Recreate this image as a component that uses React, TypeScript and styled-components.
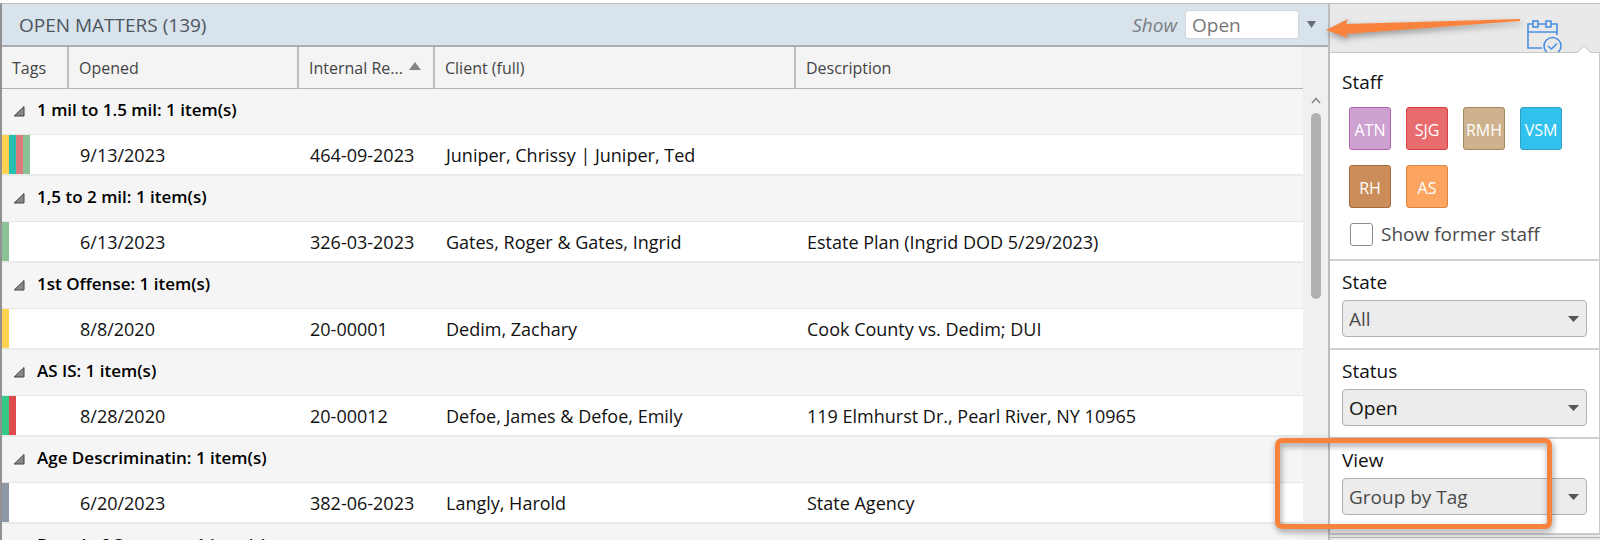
import React from "react";
import styled, { createGlobalStyle } from "styled-components";

const GlobalStyle = createGlobalStyle`
  * { box-sizing: border-box; }
  body {
    margin: 0;
    overflow: hidden;
    background: #fff;
    font-family: "Open Sans", "Noto Sans", sans-serif;
    color: #111;
  }
  button, input, select { font: inherit; }
`;

const Page = styled.div`
  position: relative;
  display: flex;
  height: 100vh;
  padding-top: 3px;
  overflow: hidden;
`;

const Matters = styled.main`
  flex: 1;
  min-width: 0;
  display: flex;
  flex-direction: column;
  border-top: 1px solid #bdbdbd;
  border-left: 2px solid #919191;
`;

const TitleBar = styled.header`
  flex: none;
  display: flex;
  align-items: center;
  height: 43px;
  padding: 0 12px 0 17px;
  background: #d9e3ec;
  border-bottom: 2px solid #a9adb1;
`;

const Title = styled.h1`
  flex: 1;
  margin: 0;
  font-size: 19px;
  font-weight: 400;
  color: #4d5660;
`;

const ShowLabel = styled.label`
  margin-right: 8px;
  font-size: 19px;
  font-style: italic;
  color: #7a7f84;
`;

const ShowInput = styled.input`
  width: 114px;
  height: 29px;
  padding: 0 6px;
  border: 1px solid #d2d6da;
  border-radius: 3px;
  background: #fff;
  font-size: 19px;
  color: #777;
`;

const ArrowButton = styled.button`
  display: flex;
  margin-left: 8px;
  padding: 0;
  border: 0;
  background: none;
`;

const Body = styled.div`
  flex: 1;
  min-height: 0;
  display: flex;
`;

const TableWrap = styled.div`
  flex: 1;
  min-width: 0;
  overflow: hidden;
`;

const Table = styled.table`
  width: 100%;
  table-layout: fixed;
  border-collapse: separate;
  border-spacing: 0;
`;

const Col = styled.col<{ $width?: number }>`
  ${(p) => (p.$width ? `width: ${p.$width}px;` : "")}
`;

const HeadCell = styled.th`
  height: 42px;
  padding: 0 0 0 10px;
  background: #f4f4f4;
  border-bottom: 1px solid #b4b4b4;
  text-align: left;
  font-size: 16px;
  font-weight: 400;
  color: #444;
  white-space: nowrap;
  & + & { border-left: 2px solid #bebebe; }
`;

const SortMark = styled.svg`
  margin: 0 0 4px 6px;
`;

const GroupCell = styled.th`
  height: 46px;
  padding: 0 0 5px 11px;
  background: #f5f5f5;
  border-bottom: 1px solid #e6e6e6;
  text-align: left;
  font-size: 17px;
  font-weight: 600;
  color: #000;
`;

const GroupToggle = styled.button`
  display: flex;
  align-items: center;
  gap: 12px;
  padding: 0;
  border: 0;
  background: none;
  color: inherit;
`;

const GroupMark = styled.svg`
  margin-top: 4px;
`;

const Cell = styled.td`
  height: 41px;
  padding: 1px 0 0 13px;
  background: #fff;
  border-bottom: 2px solid #eaeaea;
  font-size: 18px;
  white-space: nowrap;
`;

const TagCell = styled(Cell)`
  padding: 0;
`;

const Tags = styled.div`
  display: flex;
  height: 39px;
`;

const Tag = styled.span<{ $color: string }>`
  width: 7px;
  background: ${(p) => p.$color};
`;

const ScrollTrack = styled.div`
  flex: none;
  display: flex;
  flex-direction: column;
  align-items: center;
  width: 25px;
  padding-top: 50px;
  background: #f0f0f0;
`;

const ScrollThumb = styled.div`
  width: 10px;
  height: 186px;
  margin-top: 9px;
  border-radius: 5px;
  background: #b0b0b0;
`;

const Side = styled.aside`
  flex: none;
  display: flex;
  flex-direction: column;
  width: 272px;
  border-top: 1px solid #bdbdbd;
  border-left: 2px solid #bdbdbd;
  background: #e9e9e9;
`;

const SideTop = styled.div`
  flex: none;
  display: flex;
  justify-content: flex-end;
  align-items: flex-end;
  gap: 14px;
  height: 48px;
  padding-right: 9px;
`;

const Notch = styled.svg`
  position: relative;
  z-index: 1;
  margin-bottom: -1px;
`;

const Panel = styled.div`
  background: #fff;
  border: solid #c9c9c9;
  border-width: 1px 1px 2px 0;
`;

const SideFooter = styled.div`
  flex: 1;
  margin-top: 2px;
  border-top: 1px solid #b4b4b4;
`;

const Section = styled.section`
  padding: 7px 12px 11px;
  & + & { border-top: 2px solid #cfcfcf; }
  &:last-child { padding-bottom: 18px; }
`;

const StaffSection = styled(Section)`
  padding-top: 15px;
`;

const SectionLabel = styled.label`
  display: block;
  font-size: 19px;
  line-height: 28px;
  color: #111;
`;

const SectionTitle = styled.h2`
  margin: 0;
  font-size: 19px;
  font-weight: 400;
  line-height: 28px;
`;

const StaffGrid = styled.div`
  display: grid;
  grid-template-columns: repeat(4, 42px);
  gap: 15px;
  margin: 11px 0 0 7px;
`;

const StaffButton = styled.button<{ $fill: string; $edge: string }>`
  display: flex;
  justify-content: center;
  align-items: center;
  height: 43px;
  padding: 3px 0 0;
  border: 1px solid ${(p) => p.$edge};
  border-radius: 3px;
  background: ${(p) => p.$fill};
  font-size: 16px;
  color: #fff;
`;

const CheckRow = styled.label`
  display: flex;
  align-items: center;
  gap: 8px;
  margin: 12px 0 0 8px;
  font-size: 19px;
  line-height: 28px;
  color: #4a4a4a;
`;

const CheckBox = styled.input`
  appearance: none;
  width: 23px;
  height: 23px;
  margin: 0;
  border: 1px solid #8c8c8c;
  border-radius: 3px;
  background: #fff;
`;

const SelectWrap = styled.div`
  display: grid;
  align-items: center;
  margin-top: 4px;
`;

const Select = styled.select<{ $dark?: boolean }>`
  grid-area: 1 / 1;
  appearance: none;
  width: 100%;
  height: 37px;
  padding: 0 6px;
  border: 1px solid #b2b2b2;
  border-radius: 4px;
  background: #ececec;
  font-size: 19px;
  color: ${(p) => (p.$dark ? "#111" : "#4a4a4a")};
`;

const SelectArrow = styled.svg`
  grid-area: 1 / 1;
  justify-self: end;
  margin-right: 8px;
  pointer-events: none;
`;

const Pointer = styled.svg`
  position: absolute;
  top: 11px;
  right: 80px;
  pointer-events: none;
  filter: drop-shadow(1px 3px 3px rgba(0, 0, 0, 0.35));
`;

const Highlight = styled.div`
  position: absolute;
  top: 438px;
  right: 48px;
  width: 277px;
  height: 91px;
  border: 5px solid #f9833c;
  border-radius: 7px;
  pointer-events: none;
  filter: drop-shadow(1px 3px 3px rgba(0, 0, 0, 0.4));
`;

interface Matter {
  group: string;
  tags: string[];
  opened: string;
  reference: string;
  client: string;
  description: string;
}

const matters: Matter[] = [
  { group: "1 mil to 1.5 mil: 1 item(s)", tags: ["#fdd250", "#26bfb0", "#dd7a7d", "#8bc194"], opened: "9/13/2023", reference: "464-09-2023", client: "Juniper, Chrissy | Juniper, Ted", description: "" },
  { group: "1,5 to 2 mil: 1 item(s)", tags: ["#8bc194"], opened: "6/13/2023", reference: "326-03-2023", client: "Gates, Roger & Gates, Ingrid", description: "Estate Plan (Ingrid DOD 5/29/2023)" },
  { group: "1st Offense: 1 item(s)", tags: ["#fdd250"], opened: "8/8/2020", reference: "20-00001", client: "Dedim, Zachary", description: "Cook County vs. Dedim; DUI" },
  { group: "AS IS: 1 item(s)", tags: ["#35c987", "#df4a4c"], opened: "8/28/2020", reference: "20-00012", client: "Defoe, James & Defoe, Emily", description: "119 Elmhurst Dr., Pearl River, NY 10965" },
  { group: "Age Descriminatin: 1 item(s)", tags: ["#8c97a8"], opened: "6/20/2023", reference: "382-06-2023", client: "Langly, Harold", description: "State Agency" },
];

const staff = [
  { initials: "ATN", fill: "#cda1d0", edge: "#b262b6" },
  { initials: "SJG", fill: "#e86b6d", edge: "#d83f42" },
  { initials: "RMH", fill: "#cdb28d", edge: "#a58760" },
  { initials: "VSM", fill: "#31c1ee", edge: "#349fc0" },
  { initials: "RH", fill: "#cb8d59", edge: "#a56b3c" },
  { initials: "AS", fill: "#fca560", edge: "#dc8440" },
];

function Group({ label }: { label: string }) {
  return (
    <tr>
      <GroupCell colSpan={5} scope="colgroup">
        <GroupToggle type="button">
          <GroupMark width="12" height="12" viewBox="0 0 12 12" aria-hidden="true">
            <path d="M11 1.5V11H1.2Z" fill="#888" stroke="#444" />
          </GroupMark>
          {label}
        </GroupToggle>
      </GroupCell>
    </tr>
  );
}

function Filter({ id, label, value, dark }: { id: string; label: string; value: string; dark?: boolean }) {
  return (
    <Section>
      <SectionLabel htmlFor={id}>{label}</SectionLabel>
      <SelectWrap>
        <Select id={id} $dark={dark} defaultValue={value}>
          <option>{value}</option>
        </Select>
        <SelectArrow width="11" height="6" viewBox="0 0 11 6" aria-hidden="true">
          <path d="M0 0H11L5.5 6Z" fill="#555" />
        </SelectArrow>
      </SelectWrap>
    </Section>
  );
}

export default function App() {
  return (
    <Page>
      <GlobalStyle />
      <Matters>
        <TitleBar>
          <Title>OPEN MATTERS (139)</Title>
          <ShowLabel htmlFor="show">Show</ShowLabel>
          <ShowInput id="show" defaultValue="Open" />
          <ArrowButton type="button" aria-label="Choose which matters to show">
            <svg width="9" height="7" viewBox="0 0 9 7" aria-hidden="true">
              <path d="M0 0H9L4.5 7Z" fill="#666c72" />
            </svg>
          </ArrowButton>
        </TitleBar>
        <Body>
          <TableWrap>
            <Table>
              <colgroup>
                <Col $width={65} />
                <Col $width={230} />
                <Col $width={136} />
                <Col $width={361} />
                <Col />
              </colgroup>
              <thead>
                <tr>
                  <HeadCell>Tags</HeadCell>
                  <HeadCell>Opened</HeadCell>
                  <HeadCell aria-sort="ascending">
                    Internal Re...
                    <SortMark width="12" height="8" viewBox="0 0 12 8" aria-hidden="true">
                      <path d="M6 0L12 8H0Z" fill="#858585" />
                    </SortMark>
                  </HeadCell>
                  <HeadCell>Client (full)</HeadCell>
                  <HeadCell>Description</HeadCell>
                </tr>
              </thead>
              <tbody>
                {matters.map((m) => (
                  <React.Fragment key={m.group}>
                    <Group label={m.group} />
                    <tr>
                      <TagCell>
                        <Tags>
                          {m.tags.map((color) => (
                            <Tag key={color} $color={color} />
                          ))}
                        </Tags>
                      </TagCell>
                      <Cell>{m.opened}</Cell>
                      <Cell>{m.reference}</Cell>
                      <Cell>{m.client}</Cell>
                      <Cell>{m.description}</Cell>
                    </tr>
                  </React.Fragment>
                ))}
                <Group label="Board of Congress: 1 item(s)" />
              </tbody>
            </Table>
          </TableWrap>
          <ScrollTrack>
            <svg width="10" height="7" viewBox="0 0 10 7" aria-hidden="true">
              <path d="M1 6L5 1.5L9 6" fill="none" stroke="#8a8a8a" strokeWidth="1.6" />
            </svg>
            <ScrollThumb />
          </ScrollTrack>
        </Body>
      </Matters>
      <Side>
        <SideTop>
          <svg width="36" height="32" viewBox="0 0 36 32" fill="none" stroke="#4a90e2" strokeWidth="1.6" aria-hidden="true">
            <path d="M6 4H1V28H15M11 4H19M24 4H30V15M1 12H30" />
            <rect x="6" y="1" width="5" height="6" />
            <rect x="19" y="1" width="5" height="6" />
            <circle cx="25.500" cy="26" r="8.500" />
            <path d="M21 26L24.500 29L30 23.500" />
          </svg>
          <Notch width="14" height="8" viewBox="0 0 14 8" aria-hidden="true">
            <path d="M0 8L7 1L14 8" fill="#fff" stroke="#c9c9c9" />
          </Notch>
        </SideTop>
        <Panel>
          <StaffSection>
            <SectionTitle>Staff</SectionTitle>
            <StaffGrid>
              {staff.map((s) => (
                <StaffButton key={s.initials} type="button" $fill={s.fill} $edge={s.edge}>
                  {s.initials}
                </StaffButton>
              ))}
            </StaffGrid>
            <CheckRow>
              <CheckBox type="checkbox" />
              Show former staff
            </CheckRow>
          </StaffSection>
          <Filter id="state" label="State" value="All" />
          <Filter id="status" label="Status" value="Open" dark />
          <Filter id="view" label="View" value="Group by Tag" />
        </Panel>
        <SideFooter />
      </Side>
      <Pointer width="194" height="32" viewBox="0 0 194 32" aria-hidden="true">
        <path d="M0 19L22 8L20 13L194 8V10L20 23L22 27Z" fill="#f9833c" />
      </Pointer>
      <Highlight />
    </Page>
  );
}
